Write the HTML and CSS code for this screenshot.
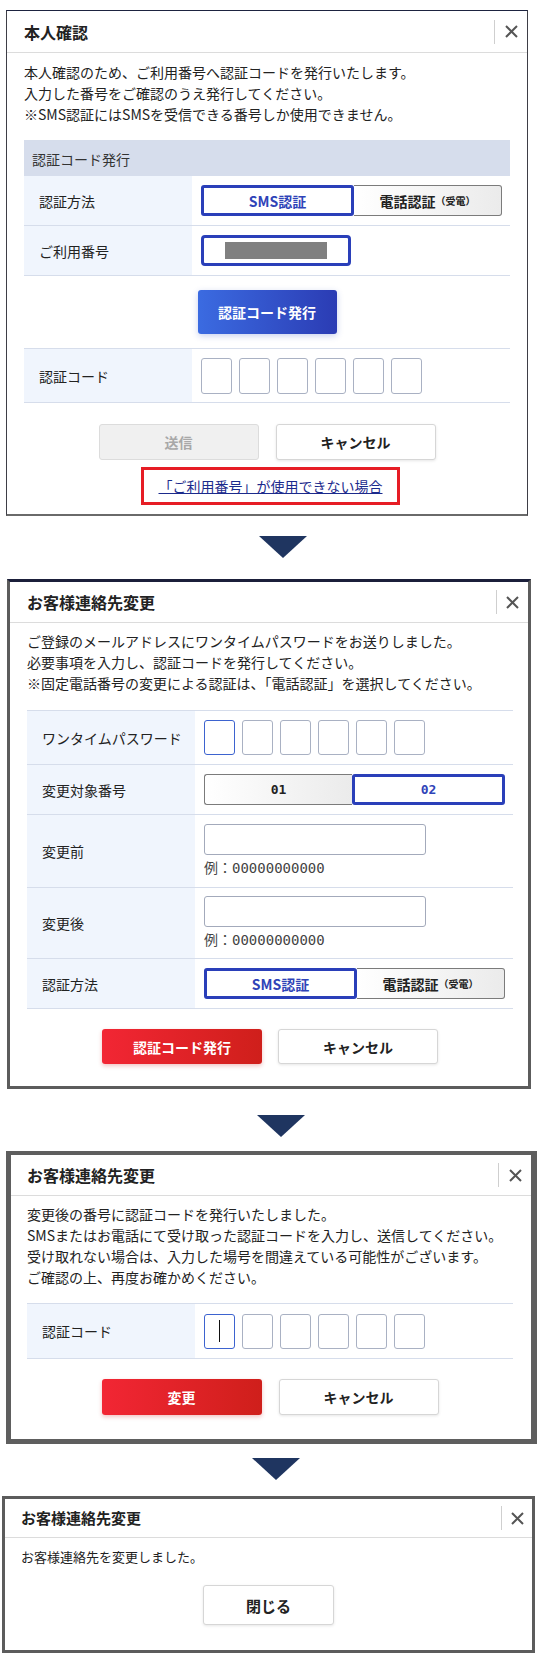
FILE: index.html
```html
<!DOCTYPE html>
<html lang="ja">
<head>
<meta charset="utf-8">
<title>本人確認フロー</title>
<link rel="stylesheet" href="styles.css">
</head>
<body>

<div class="shot shot1">
  <div class="modal">
    <div class="mhead">
      <h2 class="mtitle">本人確認</h2>
      <div class="close"><svg width="13" height="13" viewBox="0 0 13 13"><path d="M1 1L12 12M12 1L1 12" stroke="#555" stroke-width="2" fill="none"/></svg></div>
    </div>
    <div class="mbody b1">
      <p class="lead">本人確認のため、ご利用番号へ認証コードを発行いたします。<br>入力した番号をご確認のうえ発行してください。<br>※SMS認証にはSMSを受信できる番号しか使用できません。</p>
      <div class="tbl">
        <div class="thead">認証コード発行</div>
        <div class="row h50">
          <div class="lbl">認証方法</div>
          <div class="val">
            <div class="toggle"><span class="opt on">SMS認証</span><span class="opt off r">電話認証<small>（受電）</small></span></div>
          </div>
        </div>
        <div class="row h50">
          <div class="lbl">ご利用番号</div>
          <div class="val"><div class="numbox"><span class="mask"></span></div></div>
        </div>
        <div class="row full h73">
          <button class="btn blue">認証コード発行</button>
        </div>
        <div class="row h54">
          <div class="lbl">認証コード</div>
          <div class="val"><div class="codes"><span class="cb"></span><span class="cb"></span><span class="cb"></span><span class="cb"></span><span class="cb"></span><span class="cb"></span></div></div>
        </div>
      </div>
      <div class="actions a1">
        <button class="btn disabled">送信</button>
        <button class="btn plain">キャンセル</button>
      </div>
      <div class="linkbox"><a class="link" href="#">「ご利用番号」が使用できない場合</a></div>
    </div>
  </div>
</div>

<div class="arrow arrow1"></div>

<div class="shot shot2">
  <div class="modal">
    <div class="mhead h40">
      <h2 class="mtitle">お客様連絡先変更</h2>
      <div class="close"><svg width="13" height="13" viewBox="0 0 13 13"><path d="M1 1L12 12M12 1L1 12" stroke="#555" stroke-width="2" fill="none"/></svg></div>
    </div>
    <div class="mbody b2">
      <p class="lead">ご登録のメールアドレスにワンタイムパスワードをお送りしました。<br>必要事項を入力し、認証コードを発行してください。<br>※固定電話番号の変更による認証は、「電話認証」を選択してください。</p>
      <div class="tbl">
        <div class="row h54">
          <div class="lbl">ワンタイムパスワード</div>
          <div class="val"><div class="codes c35"><span class="cb focus"></span><span class="cb"></span><span class="cb"></span><span class="cb"></span><span class="cb"></span><span class="cb"></span></div></div>
        </div>
        <div class="row h50">
          <div class="lbl">変更対象番号</div>
          <div class="val">
            <div class="toggle t2"><span class="opt off l mono">01</span><span class="opt on mono">02</span></div>
          </div>
        </div>
        <div class="row h73">
          <div class="lbl">変更前</div>
          <div class="val col p9"><span class="tin"></span><span class="ex">例：<span class="mono">00000000000</span></span></div>
        </div>
        <div class="row h71">
          <div class="lbl">変更後</div>
          <div class="val col p8"><span class="tin"></span><span class="ex">例：<span class="mono">00000000000</span></span></div>
        </div>
        <div class="row h50">
          <div class="lbl">認証方法</div>
          <div class="val">
            <div class="toggle t2"><span class="opt on">SMS認証</span><span class="opt off r">電話認証<small>（受電）</small></span></div>
          </div>
        </div>
      </div>
      <div class="actions a2">
        <button class="btn red">認証コード発行</button>
        <button class="btn plain">キャンセル</button>
      </div>
    </div>
  </div>
</div>

<div class="arrow arrow2"></div>

<div class="shot shot3">
  <div class="modal">
    <div class="mhead h40">
      <h2 class="mtitle">お客様連絡先変更</h2>
      <div class="close"><svg width="13" height="13" viewBox="0 0 13 13"><path d="M1 1L12 12M12 1L1 12" stroke="#555" stroke-width="2" fill="none"/></svg></div>
    </div>
    <div class="mbody b3">
      <p class="lead">変更後の番号に認証コードを発行いたしました。<br>SMSまたはお電話にて受け取った認証コードを入力し、送信してください。<br>受け取れない場合は、入力した場号を間違えている可能性がございます。<br>ご確認の上、再度お確かめください。</p>
      <div class="tbl">
        <div class="row h55">
          <div class="lbl">認証コード</div>
          <div class="val"><div class="codes c35"><span class="cb focus"><span class="caret"></span></span><span class="cb"></span><span class="cb"></span><span class="cb"></span><span class="cb"></span><span class="cb"></span></div></div>
        </div>
      </div>
      <div class="actions a3">
        <button class="btn red">変更</button>
        <button class="btn plain">キャンセル</button>
      </div>
    </div>
  </div>
</div>

<div class="arrow arrow3"></div>

<div class="shot shot4">
  <div class="modal">
    <div class="mhead h38">
      <h2 class="mtitle">お客様連絡先変更</h2>
      <div class="close"><svg width="13" height="13" viewBox="0 0 13 13"><path d="M1 1L12 12M12 1L1 12" stroke="#555" stroke-width="2" fill="none"/></svg></div>
    </div>
    <div class="mbody b4">
      <p class="lead">お客様連絡先を変更しました。</p>
      <div class="actions a4">
        <button class="btn plain close-btn">閉じる</button>
      </div>
    </div>
  </div>
</div>

</body>
</html>
```

FILE: styles.css
```css
* { box-sizing: border-box; }

body {
  margin: 0;
  background: #fff;
  font-family: "Noto Sans CJK JP", "Noto Sans", sans-serif;
  font-size: 14px;
  color: #222;
}

.shot { background: #fff; }
.modal { background: #fff; }

.shot1 {
  margin: 10px 0 0 6px;
  width: 522px;
  border: 1px solid #3e3e46;
  border-top-color: #1d2340;
  border-bottom: 2px solid #6a6a6a;
}
.shot2 {
  margin: 21px 0 0 7px;
  width: 524px;
  border: 3px solid #5c5c5c;
  border-top-color: #1b1f3a;
}
.shot3 {
  margin: 14px 0 0 6px;
  width: 531px;
  border: 5px solid #5e5e5e;
  border-top-width: 4px;
  border-right-width: 6px;
}
.shot4 {
  margin: 16px 0 0 2px;
  width: 533px;
  border: 3px solid #5c5c5c;
}

.arrow {
  width: 0;
  height: 0;
  border-left: 24px solid transparent;
  border-right: 24px solid transparent;
  border-top: 22px solid #1f3560;
}
.arrow1 { margin: 20px 0 0 259px; }
.arrow2 { margin: 26px 0 0 257px; }
.arrow3 { margin: 14px 0 0 252px; }

/* header */
.mhead {
  display: flex;
  align-items: center;
  height: 42px;
  border-bottom: 1px solid #dcdcdc;
  padding-left: 17px;
}
.mhead.h40 { height: 41px; }
.shot3 .mhead { padding-left: 16px; }
.mhead.h38 { height: 39px; padding-left: 16px; }
.mtitle {
  flex: 1;
  margin: 0;
  font-size: 16px;
  font-weight: 700;
  color: #222;
  line-height: 20px;
}
.shot4 .mtitle { font-size: 15px; }
.close {
  width: 33px;
  height: 24px;
  border-left: 1px solid #cfcfcf;
  display: flex;
  align-items: center;
  justify-content: center;
}
.shot2 .close { width: 32px; }
.shot4 .close { width: 31px; }

/* body */
.mbody { padding: 9px 0 9px 17px; }
.mbody.b2 { padding: 8px 0 22px 17px; }
.mbody.b3 { padding: 8px 0 24px 16px; }
.mbody.b4 { padding: 8px 16px 25px 16px; }

.lead {
  margin: 0;
  line-height: 21px;
  font-size: 14px;
  color: #222;
}
.b4 .lead { font-size: 13px; }

/* table */
.tbl {
  width: 486px;
  margin-top: 15px;
  border-top: 1px solid #d6ddeb;
}
.b2 .tbl { margin-top: 16px; }
.b3 .tbl { margin-top: 15px; }

.thead {
  height: 35px;
  background: #d6ddec;
  padding-left: 8px;
  display: flex;
  align-items: center;
  color: #333;
}
.row {
  display: flex;
  border-bottom: 1px solid #d6ddeb;
}
.row.h50 { height: 50px; }
.row.h54 { height: 54px; }
.row.h55 { height: 55px; }
.row.h71 { height: 71px; }
.row.h73 { height: 73px; }
.row.full { justify-content: center; align-items: center; }

.lbl {
  width: 168px;
  flex: none;
  background: #f0f5fd;
  padding-left: 15px;
  display: flex;
  align-items: center;
  color: #222;
}
.val {
  flex: 1;
  padding-left: 9px;
  display: flex;
  align-items: center;
}
.val.col {
  flex-direction: column;
  align-items: flex-start;
  justify-content: flex-start;
}
.val.p9 { padding-top: 9px; }
.val.p8 { padding-top: 8px; }

/* toggle */
.toggle {
  display: flex;
  width: 301px;
  height: 31px;
}
.opt {
  flex: 1;
  display: flex;
  align-items: center;
  justify-content: center;
  font-weight: 700;
  font-size: 14px;
}
.opt.on {
  border: 3px solid #2a3fb9;
  border-radius: 3px;
  color: #2f43b8;
  background: #fff;
}
.opt.off {
  background: linear-gradient(90deg, #ffffff, #ebebeb);
  border: 1px solid #7b7b7b;
  color: #222;
}
.opt.off.r { border-left: none; border-radius: 0 3px 3px 0; }
.opt.off.l { border-right: none; border-radius: 3px 0 0 3px; }
.opt small { font-size: 10px; font-weight: 700; }
.mono { font-family: "DejaVu Sans Mono", "Liberation Mono", monospace; }
.opt.mono { font-size: 13px; }

/* number input */
.numbox {
  width: 150px;
  height: 31px;
  border: 3px solid #2a3fb9;
  border-radius: 4px;
  display: flex;
  align-items: center;
  justify-content: center;
}
.mask {
  width: 102px;
  height: 17px;
  background: #808080;
}

.tin {
  width: 222px;
  height: 31px;
  border: 1px solid #a3aabb;
  border-radius: 3px;
  background: #fff;
}
.ex {
  margin-top: 4px;
  line-height: 16px;
  font-size: 14px;
  color: #444;
}
.ex .mono { font-size: 14px; }

/* code boxes */
.codes { display: flex; gap: 7px; }
.cb {
  width: 31px;
  height: 36px;
  border: 1px solid #a9b1c3;
  border-radius: 3px;
  background: #fff;
  display: flex;
  align-items: center;
  justify-content: center;
}
.codes.c35 .cb { height: 35px; }
.cb.focus { border-color: #3d63cf; }
.caret { width: 1px; height: 22px; background: #111; }

/* buttons */
.btn {
  font-family: "Noto Sans CJK JP", "Noto Sans", sans-serif;
  font-size: 14px;
  font-weight: 700;
  border-radius: 3px;
  padding: 0;
  cursor: pointer;
}
.btn.blue {
  width: 139px;
  height: 44px;
  border: none;
  color: #fff;
  background: linear-gradient(90deg, #3b6be1, #2b3cb4);
  box-shadow: 0 2px 6px rgba(40, 70, 190, 0.25);
}
.btn.disabled {
  width: 160px;
  height: 36px;
  background: #f0f0f0;
  border: 1px solid #dcdcdc;
  color: #a8a8a8;
}
.btn.plain {
  width: 160px;
  height: 36px;
  background: #fff;
  border: 1px solid #d6d6d6;
  color: #222;
  box-shadow: 0 1px 3px rgba(0, 0, 0, 0.1);
}
.btn.red {
  width: 160px;
  height: 36px;
  border: none;
  color: #fff;
  background: linear-gradient(90deg, #f22634, #cf1f1b);
  box-shadow: 0 2px 4px rgba(200, 20, 20, 0.25);
}
.btn.close-btn {
  width: 131px;
  height: 40px;
  font-size: 15px;
}

.actions {
  display: flex;
  gap: 17px;
  width: 486px;
  justify-content: center;
  margin-top: 21px;
}
.actions.a2 { margin-top: 20px; gap: 16px; }
.actions.a2 .btn { height: 35px; }
.actions.a3 { margin-top: 20px; }
.actions.a4 { margin-top: 18px; width: auto; }

.linkbox {
  margin: 7px 0 0 117px;
  width: 259px;
  height: 38px;
  border: 3px solid #e61d25;
  display: flex;
  align-items: center;
  justify-content: center;
}
.link {
  color: #1b2a8c;
  text-decoration: underline;
  font-size: 14px;
}
```
